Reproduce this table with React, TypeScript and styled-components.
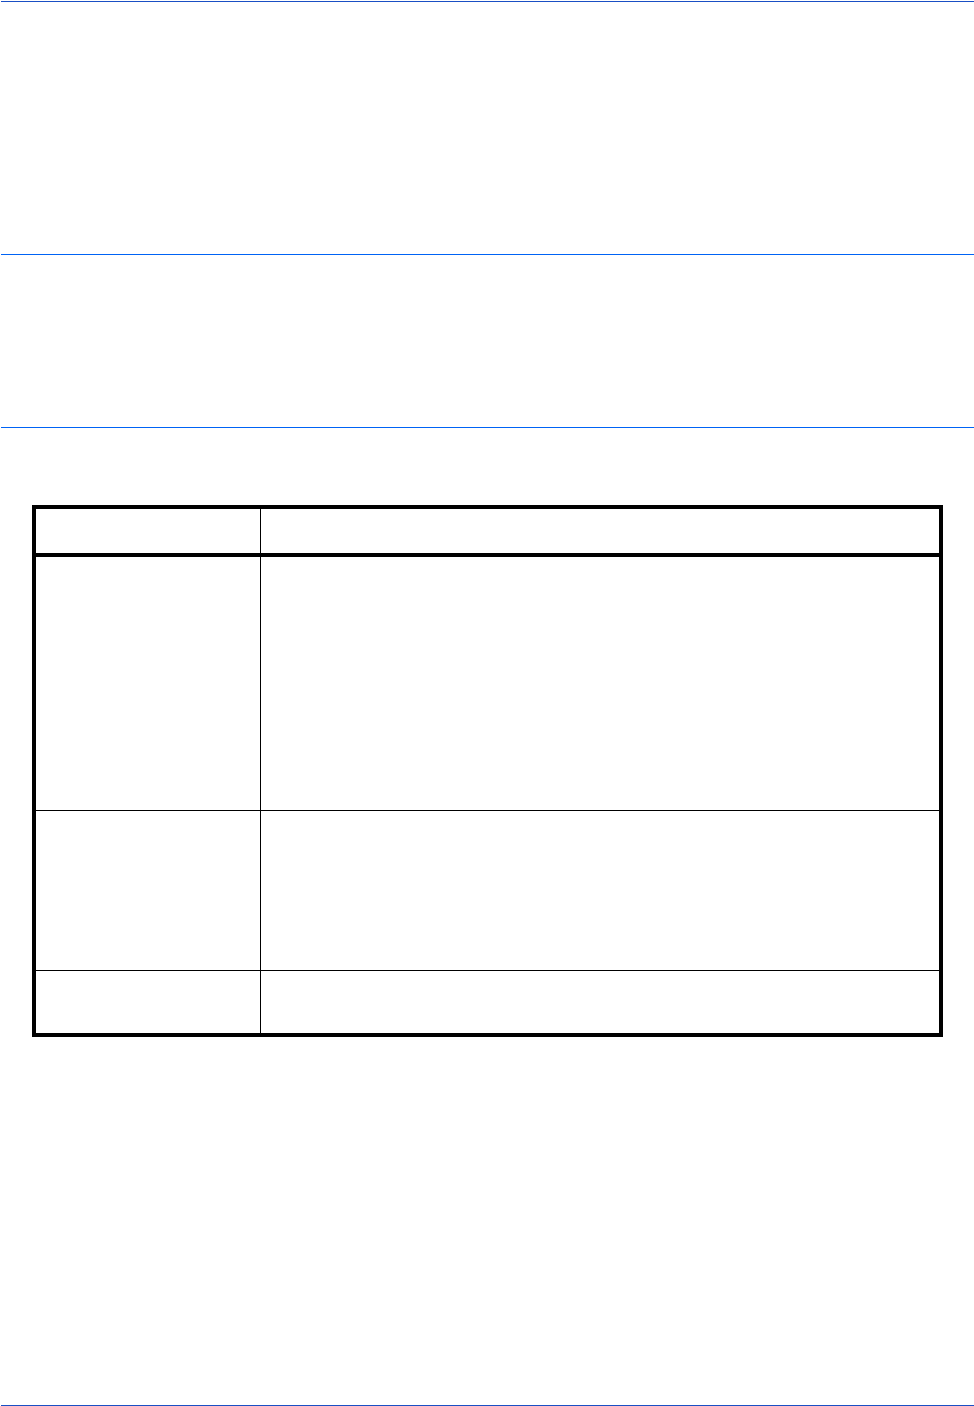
import React from "react";
import styled, { createGlobalStyle } from "styled-components";

const Global = createGlobalStyle`
  html, body { margin: 0; padding: 0; background: #ffffff; }
  body { font-family: "Liberation Sans", Arial, sans-serif; }
`;

const Page = styled.div`
  width: 974px;
  height: 1406px;
  display: flex;
  flex-direction: column;
  background: #ffffff;
  box-sizing: border-box;
`;

const Rule = styled.div<{ $top: number; $color: string }>`
  margin-top: ${(p) => p.$top}px;
  margin-left: 1px;
  height: 1px;
  background: ${(p) => p.$color};
  flex: none;
`;

const BottomRule = styled.div`
  margin-top: auto;
  margin-left: 1px;
  height: 1px;
  background: #1a4fc4;
  flex: none;
`;

const Table = styled.div`
  margin-top: 77px;
  margin-left: 32px;
  width: 911px;
  border: 4px solid #000000;
  box-sizing: border-box;
  display: grid;
  grid-template-columns: 225px 1fr;
  flex: none;
`;

const Cell = styled.div<{ $h: number; $border: number; $left?: boolean }>`
  height: ${(p) => p.$h}px;
  border-bottom: ${(p) => p.$border}px solid #000000;
  border-right: ${(p) => (p.$left ? "1px solid #000000" : "none")};
`;

const rows = [
  { h: 44, b: 4 },
  { h: 253, b: 1 },
  { h: 159, b: 1 },
  { h: 62, b: 0 },
];

export default function App() {
  return (
    <>
      <Global />
      <Page>
        <Rule $top={1} $color="#1a4fc4" />
        <Rule $top={252} $color="#0063f5" />
        <Rule $top={172} $color="#0063f5" />
        <Table>
          {rows.map((r, i) => (
            <React.Fragment key={i}>
              <Cell $h={r.h} $border={r.b} $left />
              <Cell $h={r.h} $border={r.b} />
            </React.Fragment>
          ))}
        </Table>
        <BottomRule />
      </Page>
    </>
  );
}
